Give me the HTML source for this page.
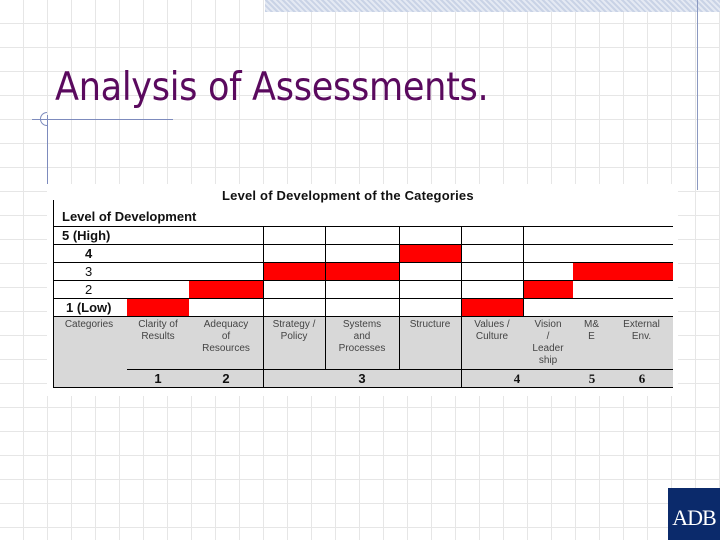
<!DOCTYPE html>
<html><head><meta charset="utf-8"><style>
body{margin:0;width:720px;height:540px;overflow:hidden;position:relative;font-family:"Liberation Sans",sans-serif;
background-color:#fff;
background-image:repeating-linear-gradient(to right,transparent 0 23px,#e6e6e6 23px 24px),repeating-linear-gradient(to bottom,transparent 0 23px,#e6e6e6 23px 24px);}
div{position:absolute;box-sizing:border-box}
.c{font-size:10px;color:#444;text-align:center;line-height:12px}
.r{background:#ff0000}
.h{height:1px;background:#000}
.v{width:1px;background:#000}
.n{font-size:13px;font-weight:bold;text-align:center;color:#111}
.l{font-size:13px;font-weight:bold;color:#111}
</style></head><body>
<div style="left:265px;top:0;width:455px;height:12px;background:repeating-linear-gradient(45deg,#c9d3e6 0 2px,#e4e9f3 2px 4px)"></div>
<div style="left:697px;top:0;width:1px;height:190px;background:#8a98c0"></div>
<div style="left:55px;top:65px;font-size:39px;color:#5a0a5e;font-family:'DejaVu Sans Condensed','DejaVu Sans',sans-serif;letter-spacing:-0.3px;white-space:nowrap">Analysis of Assessments.</div>
<div style="left:32px;top:119px;width:141px;height:1px;background:#7d8bbd"></div>
<div style="left:47px;top:115px;width:1px;height:105px;background:#7d8bbd"></div>
<div style="left:40px;top:112px;width:14px;height:14px;border:1px solid #7d8bbd;border-radius:50%;clip-path:inset(0 50% 0 0)"></div>

<div style="left:47px;top:184px;width:631px;height:212px;background:#fff"></div>
<div style="left:222px;top:188px;font-size:13px;font-weight:bold;color:#111;white-space:nowrap;letter-spacing:0.2px">Level of Development of the Categories</div>
<div style="left:53px;top:200px;width:1px;height:188px;background:#000"></div>
<div class="l" style="left:62px;top:209px">Level of Development</div>
<div style="left:54px;top:317px;width:619px;height:70px;background:#d8d8d8"></div>
<div class="r" style="left:127px;top:299px;width:62px;height:18px"></div>
<div class="r" style="left:189px;top:281px;width:74px;height:18px"></div>
<div class="r" style="left:263px;top:263px;width:136px;height:18px"></div>
<div class="r" style="left:399px;top:245px;width:62px;height:18px"></div>
<div class="r" style="left:461px;top:299px;width:62px;height:18px"></div>
<div class="r" style="left:523px;top:281px;width:50px;height:18px"></div>
<div class="r" style="left:573px;top:263px;width:100px;height:18px"></div>
<div class="h" style="left:53px;top:226px;width:620px"></div>
<div class="h" style="left:53px;top:244px;width:620px"></div>
<div class="h" style="left:53px;top:262px;width:620px"></div>
<div class="h" style="left:53px;top:280px;width:620px"></div>
<div class="h" style="left:53px;top:298px;width:620px"></div>
<div class="h" style="left:53px;top:316px;width:620px"></div>
<div class="h" style="left:127px;top:369px;width:546px"></div>
<div class="h" style="left:53px;top:387px;width:620px"></div>
<div class="v" style="left:263px;top:226px;height:162px"></div>
<div class="v" style="left:325px;top:226px;height:144px"></div>
<div class="v" style="left:399px;top:226px;height:144px"></div>
<div class="v" style="left:461px;top:226px;height:162px"></div>
<div class="v" style="left:523px;top:226px;height:91px"></div>
<div class="l" style="left:62px;top:228px">5 (High)</div>
<div class="l" style="left:85px;top:246px">4</div>
<div class="l" style="left:85px;top:264px;font-weight:normal">3</div>
<div class="l" style="left:85px;top:282px;font-weight:normal">2</div>
<div class="l" style="left:66px;top:300px">1 (Low)</div>
<div class="c" style="left:55px;top:319px;width:68px">Categories</div>
<div class="c" style="left:127px;top:319px;width:62px">Clarity of<br>Results</div>
<div class="c" style="left:189px;top:319px;width:74px">Adequacy<br>of<br>Resources</div>
<div class="c" style="left:263px;top:319px;width:62px">Strategy /<br>Policy</div>
<div class="c" style="left:325px;top:319px;width:74px">Systems<br>and<br>Processes</div>
<div class="c" style="left:399px;top:319px;width:62px">Structure</div>
<div class="c" style="left:461px;top:319px;width:62px">Values /<br>Culture</div>
<div class="c" style="left:523px;top:319px;width:50px">Vision<br>/<br>Leader<br>ship</div>
<div class="c" style="left:573px;top:319px;width:37px">M&amp;<br>E</div>
<div class="c" style="left:610px;top:319px;width:63px">External<br>Env.</div>
<div class="n" style="left:127px;top:371px;width:62px">1</div>
<div class="n" style="left:189px;top:371px;width:74px">2</div>
<div class="n" style="left:263px;top:371px;width:198px">3</div>
<div class="n" style="left:505px;top:371px;width:24px;font-family:'Liberation Serif',serif">4</div>
<div class="n" style="left:580px;top:371px;width:24px;font-family:'Liberation Serif',serif">5</div>
<div class="n" style="left:630px;top:371px;width:24px;font-family:'Liberation Serif',serif">6</div>

<div style="left:668px;top:488px;width:52px;height:52px;background:#0b2a6b"></div>
<div style="left:668px;top:506px;width:52px;color:#fff;font-family:'Liberation Serif',serif;font-size:22px;line-height:24px;text-align:center;letter-spacing:-1px">ADB</div>
</body></html>
